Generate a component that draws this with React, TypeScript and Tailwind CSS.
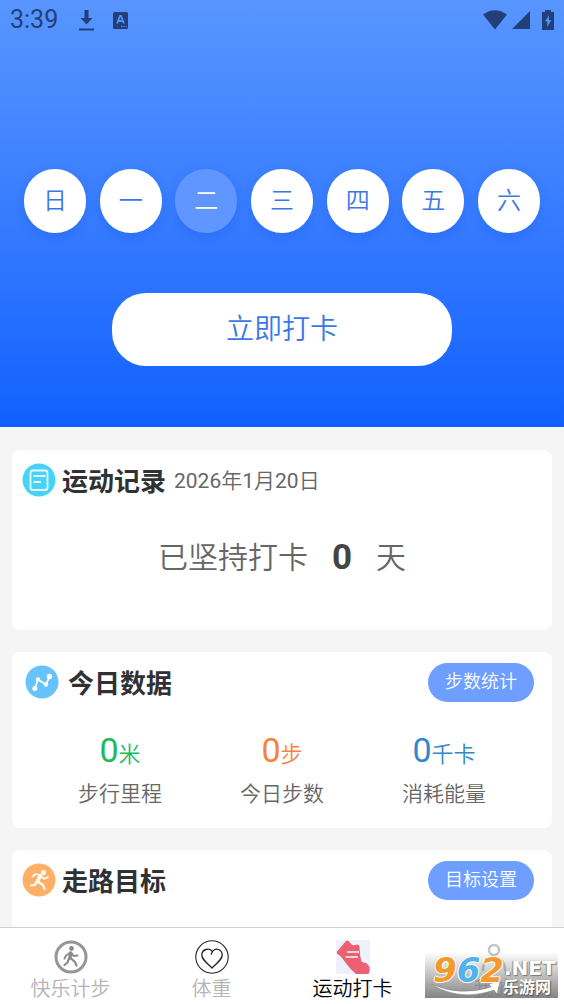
import type { ReactNode } from "react";

const days = ["日", "一", "二", "三", "四", "五", "六"];
const today = 2;

const stats = [
  { value: "0", unit: "米", label: "步行里程", color: "text-[#1dba5c]" },
  { value: "0", unit: "步", label: "今日步数", color: "text-[#f5823f]" },
  { value: "0", unit: "千卡", label: "消耗能量", color: "text-[#3487cd]" },
];

const dateParts = [
  { value: "2026", unit: "年" },
  { value: "1", unit: "月" },
  { value: "20", unit: "日" },
];

function StatusBar() {
  return (
    <div className="flex h-10 items-center justify-between pr-[10px] pl-[10px] text-[#223f78]">
      <div className="flex items-center">
        <span className="w-[68px] text-[25px] leading-10">3:39</span>
        <svg width="17" height="21" viewBox="0 0 17 21" fill="currentColor" aria-hidden="true">
          <path d="M6.5 0h4v8h4L8.500 14.500 2.500 8h4zM1 18.500h15v2H1z" />
        </svg>
        <svg className="ml-[18px]" width="15" height="17" viewBox="0 0 15 17" aria-hidden="true">
          <rect width="15" height="17" rx="1.500" fill="currentColor" />
          <path d="M4 11.500 7 4h1l3 7.500M5.200 9h4.600" fill="none" stroke="#5490fb" strokeWidth="1.800" />
          <path d="M8 14.500h1.500M10.500 14.500H12M12.700 14.500h1" stroke="#5490fb" />
        </svg>
      </div>
      <div className="flex items-center" aria-hidden="true">
        <svg width="26" height="20" viewBox="0 0 26 20" fill="currentColor">
          <path d="M1 4.500Q13-4 25 4.500L13 19.500z" />
        </svg>
        <svg className="ml-1" width="18" height="18" viewBox="0 0 18 18" fill="currentColor">
          <path d="M18 0v18H0z" />
        </svg>
        <svg className="ml-3" width="12" height="20" viewBox="0 0 12 20">
          <path d="M3 0h6v2h3v18H0V2h3z" fill="currentColor" />
          <path d="M7 5 3 11.500h2.300V17L9.200 10H6.800z" fill="#5591fc" />
        </svg>
      </div>
    </div>
  );
}

function RecordIcon() {
  return (
    <svg width="34" height="34" viewBox="0 0 34 34" aria-hidden="true">
      <circle cx="17" cy="17" r="16.500" fill="#46d3f7" />
      <rect x="8.500" y="7.500" width="17" height="19.500" rx="2.500" fill="none" stroke="#e9fbff" strokeWidth="1.800" />
      <path d="M11.500 13h12M11.500 19h7.500" stroke="#e9fbff" strokeWidth="1.800" />
    </svg>
  );
}

function ChartIcon() {
  return (
    <svg width="34" height="34" viewBox="0 0 34 34" fill="#fff" aria-hidden="true">
      <circle cx="17" cy="17" r="16.500" fill="#66c3fd" />
      <path d="M10 23 13 14.500 21 19.500 24.500 11.500" fill="none" stroke="#fff" strokeWidth="1.800" />
      <circle cx="9.800" cy="23.500" r="2.500" />
      <circle cx="13" cy="14.500" r="2.200" />
      <circle cx="21" cy="19.500" r="2.200" />
      <circle cx="24.500" cy="11.500" r="2.700" />
    </svg>
  );
}

function RunnerIcon() {
  return (
    <svg width="34" height="34" viewBox="0 0 34 34" aria-hidden="true">
      <circle cx="17" cy="17" r="16.500" fill="#ffb066" />
      <circle cx="21.500" cy="9.500" r="2.600" fill="#fff" />
      <g fill="none" stroke="#fff" strokeLinecap="round" strokeLinejoin="round">
        <path d="M10.500 13.500 13.500 11l5 1 3.500 4 4-2" strokeWidth="1.700" />
        <path d="m18 13-2.500 5.500" strokeWidth="3.600" />
        <path d="m14.500 18.500-1.500 3.500-4 .300M16 19l5 3 1.500 4" strokeWidth="2.100" />
      </g>
    </svg>
  );
}

function WalkTabIcon() {
  return (
    <svg width="34" height="34" viewBox="0 0 34 34" aria-hidden="true">
      <circle cx="17" cy="17" r="15" fill="none" stroke="#969696" strokeWidth="3" />
      <circle cx="17.500" cy="8.500" r="2.400" fill="#8b8b8b" />
      <g fill="none" stroke="#8b8b8b" strokeLinecap="round" strokeLinejoin="round">
        <path d="m16 13-4 2.500-1.500 3M17.500 13l2 3 4-.500" strokeWidth="2" />
        <path d="m16.500 13-.500 5" strokeWidth="3.500" />
        <path d="m15 18.500-1.500 4L10.500 25M16.500 18l4.500 4 1.500 3.500" strokeWidth="2.200" />
      </g>
    </svg>
  );
}

function HeartTabIcon() {
  return (
    <svg width="34" height="34" viewBox="0 0 34 34" fill="none" stroke="#222" aria-hidden="true">
      <circle cx="17" cy="17" r="16.200" strokeWidth="1.100" />
      <path
        d="M16 14.500 17.500 11.500C14.500 7.500 6.800 9 6.800 15c0 4 4 7 10.200 13 6.200-6 10.200-9 10.200-13 0-6-7-7.500-9.700-3.500"
        strokeWidth="1.300"
        strokeLinejoin="round"
      />
    </svg>
  );
}

function ShoeTabIcon() {
  return (
    <svg width="34" height="34" viewBox="0 0 34 34" aria-hidden="true">
      <path fill="#edf2fa" d="M0 0h34v34H0z" />
      <path
        fill="#ec6072"
        d="M1 11.500 10 1q1-1 2.500 0l3 3.500q1.500 1 3.500 .500l2.500-.500q2 0 2 2.500 0 8 2 14.500 1 .700 4 1.500 5 2 4 8.500l-1 2.500H20Q14 29 9 22 5 16 1.500 14q-1-1-.500-2.500z"
      />
      <path d="M11 12h12M9.500 17H22" stroke="#fbd7dd" strokeWidth="1.800" />
    </svg>
  );
}

function ProfileTabIcon() {
  return (
    <svg width="34" height="34" viewBox="0 0 34 34" fill="none" stroke="#c4c4c4" strokeWidth="2.500" aria-hidden="true">
      <circle cx="17" cy="10" r="5" />
      <path d="M6 31q0-13 11-13t11 13" />
    </svg>
  );
}

const tabs = [
  { label: "快乐计步", icon: <WalkTabIcon />, active: false },
  { label: "体重", icon: <HeartTabIcon />, active: false },
  { label: "运动打卡", icon: <ShoeTabIcon />, active: true },
  { label: "我的", icon: <ProfileTabIcon />, active: false },
];

function CardHeader({ icon, title, action, inset }: { icon: ReactNode; title: string; action?: string; inset?: boolean }) {
  return (
    <div className="flex h-[60px] items-center justify-between pr-[18px]">
      <div className={inset ? "flex items-center gap-[9px] pl-[13px]" : "flex items-center gap-[6px] pl-[10px]"}>
        {icon}
        <h2 className="pt-1 text-[26px] leading-9 font-bold text-[#303133]">{title}</h2>
      </div>
      {action && (
        <button type="button" className="h-[39px] w-[106px] rounded-full bg-[#6e9eff] pb-px text-lg font-[350] text-white">
          {action}
        </button>
      )}
    </div>
  );
}

function Watermark() {
  return (
    <div className="absolute right-[6px] bottom-[6px] h-[46px] w-[133px] bg-linear-to-b from-transparent to-[#767676]/90">
      <svg className="absolute inset-0" width="133" height="46" viewBox="0 0 133 46" aria-hidden="true">
        <path d="M6 32Q35 45 66 35l-2-3 11-3-3 13-3-4Q35 50 6 32z" fill="#fff" stroke="#888" strokeWidth=".500" />
      </svg>
      <div className="absolute top-[2px] left-[8px] font-['DejaVu_Sans'] text-[34px] leading-8 font-bold italic [text-shadow:1px_0_#fff,-1px_0_#fff,0_1px_#fff,0_-1px_#fff]">
        <span className="text-[#f39a2d]">9</span>
        <span className="text-[#50b3ea]">6</span>
        <span className="text-[#f39a2d]">2</span>
      </div>
      <div className="absolute top-[7px] left-[79px] font-['DejaVu_Sans'] text-[20px] leading-[18px] font-bold text-white [text-shadow:1px_1px_1px_#777,-1px_0_1px_#888]">
        .NET
      </div>
      <div className="absolute top-[27px] left-[78px] text-[16px] leading-[18px] font-bold text-white [text-shadow:1px_1px_1px_#555]">
        乐游网
      </div>
    </div>
  );
}

export default function App() {
  return (
    <div className="flex h-screen flex-col overflow-hidden bg-[#f5f5f5] font-['Roboto','Noto_Sans_CJK_SC',sans-serif]">
      <main className="min-h-0 flex-1 overflow-hidden">
        <header className="bg-linear-to-b from-[#5895ff] to-[#0f60ff] pb-[61px]">
          <StatusBar />
          <div className="flex justify-between px-6 pt-[129px]">
            {days.map((day, i) => (
              <button
                key={day}
                type="button"
                className={
                  i === today
                    ? "h-16 w-[62px] rounded-full bg-[#5f96ff] text-2xl font-[350] text-white shadow-[0_4px_10px_rgba(20,80,220,0.25)]"
                    : "h-16 w-[62px] rounded-full bg-white text-2xl font-[350] text-[#3a78e6] shadow-[0_4px_10px_rgba(20,80,220,0.25)]"
                }
              >
                {day}
              </button>
            ))}
          </div>
          <div className="px-28 pt-[60px]">
            <button type="button" className="h-[73px] w-full rounded-[34px] bg-white text-[28px] font-[350] text-[#3a78e6]">
              立即打卡
            </button>
          </div>
        </header>

        <div className="flex flex-col gap-[22px] px-3 pt-[23px]">
          <section className="h-[180px] rounded-lg bg-white">
            <div className="flex items-center">
              <CardHeader icon={<RecordIcon />} title="运动记录" />
              <time dateTime="2026-01-20" className="-ml-[10px] pt-1 text-[21px] text-[#666]">
                {dateParts.map((p) => (
                  <span key={p.unit}>
                    {p.value}
                    <span className="font-[350]">{p.unit}</span>
                  </span>
                ))}
              </time>
            </div>
            <p className="flex items-center justify-center pt-[26px] text-[30px] leading-[44px] font-[350] text-[#666]">
              已坚持打卡<strong className="mx-6 text-[35px] font-bold text-[#444]">0</strong>天
            </p>
          </section>

          <section className="h-[176px] rounded-lg bg-white">
            <CardHeader icon={<ChartIcon />} title="今日数据" action="步数统计" inset />
            <dl className="grid grid-cols-3 px-[27px] pt-4 text-center">
              {stats.map((s) => (
                <div key={s.label} className="flex flex-col-reverse">
                  <dt className="text-[21px] leading-[44px] font-[350] text-[#666]">{s.label}</dt>
                  <dd className={s.color}>
                    <span className="text-[34px] leading-[44px]">{s.value}</span>
                    <span className="text-[22px] font-[350]">{s.unit}</span>
                  </dd>
                </div>
              ))}
            </dl>
          </section>

          <section className="h-[176px] rounded-lg bg-white">
            <CardHeader icon={<RunnerIcon />} title="走路目标" action="目标设置" />
          </section>
        </div>
      </main>

      <nav className="relative grid shrink-0 grid-cols-4 border-t border-[#d0d0d0] bg-white">
        {tabs.map((t) => (
          <a
            key={t.label}
            href="#"
            className={
              t.active
                ? "flex h-[76px] flex-col items-center pt-3 text-xl font-[350] text-black"
                : "flex h-[76px] flex-col items-center pt-3 text-xl font-[350] text-[#b4b4b4]"
            }
          >
            <span className="shrink-0">{t.icon}</span>
            <span className="leading-[30px]">{t.label}</span>
          </a>
        ))}
        <Watermark />
      </nav>
    </div>
  );
}
